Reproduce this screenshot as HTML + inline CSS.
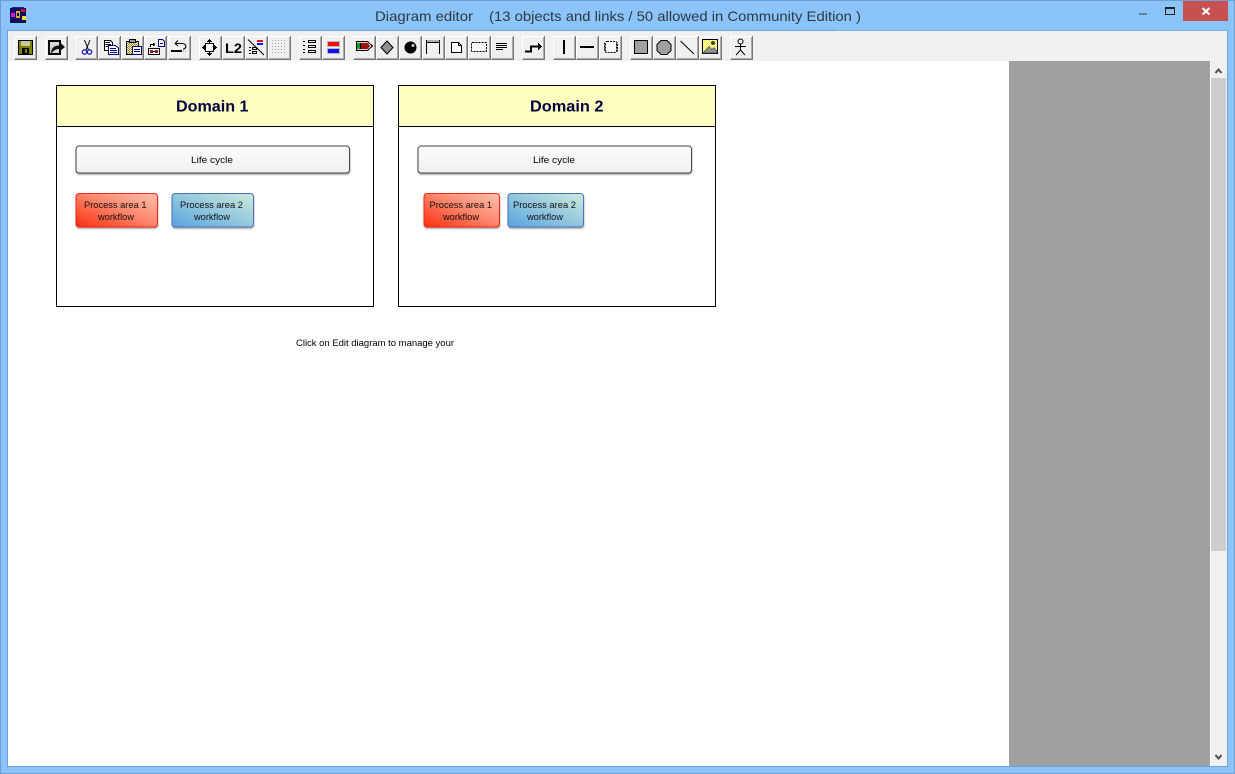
<!DOCTYPE html>
<html><head><meta charset="utf-8"><title>Diagram editor</title>
<style>
html,body{margin:0;padding:0;width:1235px;height:774px;overflow:hidden;background:#8ac4fb}
svg{display:block}
text{font-family:"Liberation Sans",sans-serif}
</style></head>
<body>
<svg xmlns="http://www.w3.org/2000/svg" width="1235" height="774" viewBox="0 0 1235 774">
<defs>
<linearGradient id="lc" x1="0" y1="0" x2="0" y2="1"><stop offset="0" stop-color="#fcfcfc"/><stop offset="1" stop-color="#f0f0f0"/></linearGradient>
<linearGradient id="red" x1="0" y1="1" x2="1" y2="0"><stop offset="0" stop-color="#fb2c0c"/><stop offset=".55" stop-color="#fd8a70"/><stop offset="1" stop-color="#ffc0ae"/></linearGradient>
<linearGradient id="blue" x1="0" y1="1" x2="1" y2="0"><stop offset="0" stop-color="#58a4e0"/><stop offset="1" stop-color="#cdeadb"/></linearGradient>
<pattern id="chk" width="2" height="2" patternUnits="userSpaceOnUse"><rect width="2" height="2" fill="#fff"/><rect width="1" height="1" fill="#f4f000"/><rect x="1" y="1" width="1" height="1" fill="#f4f000"/></pattern>
<pattern id="chk2" width="2" height="2" patternUnits="userSpaceOnUse"><rect width="2" height="2" fill="#f0eac0"/><rect width="1" height="1" fill="#a09030"/><rect x="1" y="1" width="1" height="1" fill="#a09030"/></pattern>
<filter id="sh" x="-5%" y="-10%" width="110%" height="125%"><feDropShadow dx=".3" dy="1.500" stdDeviation=".7" flood-color="#000" flood-opacity=".32"/></filter>
<g id="b" shape-rendering="crispEdges">
<rect x="0" y="1" width="23" height="24" fill="#f0f0f0"/>
<path d="M.5 24V1.500H22" fill="none" stroke="#fff"/>
<path d="M.5 24.500H22.500V1" fill="none" stroke="#787878"/>
<path d="M1 23.500H21.500V2" fill="none" stroke="#ababab"/>
</g>
</defs>

<!-- window frame -->
<rect x="0" y="0" width="1235" height="774" fill="#8ac4fb"/>
<rect x=".5" y=".5" width="1234" height="773" fill="none" stroke="#6f9fcf"/>
<rect x="7.500" y="30.500" width="1220" height="736" fill="#f0f0f0" stroke="#6fa3d6"/>
<rect x="836" y="30" width="391" height="1" fill="#7fb0e0"/>

<!-- app icon -->
<g shape-rendering="crispEdges">
<rect x="10" y="8" width="16" height="15" fill="#0a0a6a"/>
<rect x="12" y="7" width="12" height="1" fill="#20208a"/>
<rect x="11" y="13" width="4" height="4" fill="#e010d0"/>
<rect x="21" y="9" width="4" height="3" fill="#e01010"/>
<rect x="22" y="16" width="4" height="4" fill="#f0e020"/>
<rect x="16" y="11" width="4" height="7" fill="#d8b030"/>
<rect x="17" y="13" width="2" height="3" fill="#0a0a6a"/>
<rect x="10" y="20" width="16" height="3" fill="#101050"/>
</g>

<!-- title -->
<text x="375" y="21" font-size="14" fill="#303840" textLength="98" lengthAdjust="spacingAndGlyphs">Diagram editor</text>
<text x="489" y="21" font-size="14" fill="#303840" textLength="372" lengthAdjust="spacingAndGlyphs">(13 objects and links / 50 allowed in Community Edition )</text>

<!-- caption buttons -->
<g shape-rendering="crispEdges">
<rect x="1139" y="13" width="8" height="2" fill="#5f7f9f"/>
<rect x="1165.500" y="7.500" width="9" height="7" fill="none" stroke="#222" stroke-width="1"/>
<rect x="1165" y="7" width="10" height="2" fill="#222"/>
<rect x="1183" y="1" width="45" height="20" fill="#c75050"/>
</g>
<path d="M1202.500 8L1209.500 14.500M1209.500 8L1202.500 14.500" stroke="#fff" stroke-width="2" fill="none"/>

<!-- watermark -->
<circle cx="84" cy="46" r="9" fill="none" stroke="#e2e2e2" stroke-width="3"/>

<!-- toolbar buttons -->
<g>
<use href="#b" x="14" y="35"/><use href="#b" x="45" y="35"/>
<use href="#b" x="75" y="35"/><use href="#b" x="98" y="35"/><use href="#b" x="121" y="35"/><use href="#b" x="144" y="35"/><use href="#b" x="168" y="35"/>
<use href="#b" x="199" y="35"/><use href="#b" x="222" y="35"/><use href="#b" x="245" y="35"/><use href="#b" x="268" y="35"/>
<use href="#b" x="299" y="35"/><use href="#b" x="322" y="35"/>
<use href="#b" x="353" y="35"/><use href="#b" x="376" y="35"/><use href="#b" x="399" y="35"/><use href="#b" x="422" y="35"/><use href="#b" x="445" y="35"/><use href="#b" x="468" y="35"/><use href="#b" x="491" y="35"/>
<use href="#b" x="522" y="35"/>
<use href="#b" x="553" y="35"/><use href="#b" x="576" y="35"/><use href="#b" x="599" y="35"/>
<use href="#b" x="630" y="35"/><use href="#b" x="653" y="35"/><use href="#b" x="676" y="35"/><use href="#b" x="699" y="35"/>
<use href="#b" x="730" y="35"/>
</g>

<g shape-rendering="crispEdges">
<!-- save -->
<rect x="18" y="40" width="15" height="15" fill="#000"/>
<rect x="19" y="41" width="13" height="13" fill="#808000"/>
<rect x="21" y="41" width="9" height="5" fill="#c8c8a0"/>
<rect x="22" y="48" width="7" height="6" fill="#000"/>
<rect x="25" y="49" width="2" height="4" fill="#808000"/>
<!-- open/export -->
<rect x="48" y="40" width="13" height="15" fill="#000"/>
<rect x="50" y="42" width="9" height="11" fill="#d8d8d8"/>
</g>
<path d="M51 54C51 48 54 45.500 59 45.500V41.500L65 47L59 52V49C56 49 53 50.500 51 54Z" fill="#111"/>

<!-- scissors -->
<g fill="none" stroke="#000" stroke-width="1">
<path d="M84.500 40L88.500 50M90 40L86 50"/>
<circle cx="84.500" cy="52" r="2.200" stroke="#2020b0" stroke-width="1.300"/>
<circle cx="89.500" cy="52" r="2.200" stroke="#2020b0" stroke-width="1.300"/>
</g>

<g shape-rendering="crispEdges">
<!-- copy -->
<path d="M104.500 40.500H110.500L112.500 42.500V50.500H104.500Z" fill="#fff" stroke="#000"/>
<path d="M105.500 42.500H110M105.500 44.500H111M105.500 46.500H108" stroke="#000" fill="none"/>
<path d="M108.500 45.500H115.500L118.500 48V54.500H108.500Z" fill="#fff" stroke="#000080"/>
<path d="M110 48.500H116M110 50.500H117M110 52.500H117" stroke="#000080" fill="none"/>
<!-- paste -->
<rect x="126.500" y="41.500" width="12" height="13" fill="url(#chk2)" stroke="#000"/>
<rect x="129.500" y="39.500" width="6" height="3" fill="#a0a0a0" stroke="#000"/>
<rect x="132.500" y="46.500" width="9" height="8" fill="#fff" stroke="#000080"/>
<path d="M134 49.500H140M134 51.500H140" stroke="#000080"/>
<!-- special -->
<rect x="148.500" y="48.500" width="11" height="6" fill="#fff" stroke="#000"/>
<rect x="150" y="50" width="3" height="3" fill="#902020"/>
<rect x="155" y="50" width="3" height="3" fill="#902020"/>
<rect x="153" y="51" width="2" height="1" fill="#000"/>
<path d="M150.500 47V44.500H154" stroke="#000" fill="none"/>
<path d="M153 43h1v3h-1zM154 43.500h1v2h-1z" fill="#000"/>
<path d="M158.500 39.500H162.500L164.500 41.500V46.500H158.500Z" fill="#fff" stroke="#000080"/>
<path d="M160 43.500H163" stroke="#000080"/>
<!-- undo -->
<rect x="171" y="50" width="11" height="2" fill="#000"/>
<path d="M183 51h1M185 51h1" stroke="#808080"/>
</g>
<path d="M175 43.500H182C187 43.500 187 49 183 49M175 43.500L178 40.500M175 43.500L178 46" fill="none" stroke="#000" stroke-width="1.100"/>

<g shape-rendering="crispEdges">
<!-- move -->
<rect x="205.500" y="43.500" width="8" height="8" fill="#fff" stroke="#000"/>
<path d="M209 39h1v1h-1zM208 40h3v1h-3zM207 41h5v1h-5zM209 42h1v1h-1z" fill="#000"/>
<path d="M209 55h1v1h-1zM208 54h3v1h-3zM207 53h5v1h-5zM209 52h1v1h-1z" fill="#000"/>
<path d="M202 47h1v1h-1zM203 46h1v3h-1zM204 45h1v5h-1zM216 47h1v1h-1zM215 46h1v3h-1zM214 45h1v5h-1z" fill="#000"/>
</g>
<!-- L2 -->
<text x="225" y="53" font-size="14" font-weight="bold" fill="#000" textLength="17" lengthAdjust="spacingAndGlyphs">L2</text>

<g shape-rendering="crispEdges">
<!-- layers off -->
<rect x="257" y="40" width="6" height="2" fill="#e01010"/>
<rect x="257" y="43" width="6" height="2" fill="#1010e0"/>
<path d="M249 47h2v1h-2zM249 50h2v1h-2zM249 53h2v1h-2z" fill="#000"/>
<rect x="252.500" y="47.500" width="4" height="2" fill="none" stroke="#000"/>
<rect x="252.500" y="51.500" width="4" height="2" fill="none" stroke="#000"/>
<!-- grid -->
<g fill="#a4a4a4">
<path d="M272 40h1v1h-1zM275 40h1v1h-1zM278 40h1v1h-1zM281 40h1v1h-1zM284 40h1v1h-1z"/>
<path d="M272 43h1v1h-1zM275 43h1v1h-1zM278 43h1v1h-1zM281 43h1v1h-1zM284 43h1v1h-1z"/>
<path d="M272 46h1v1h-1zM275 46h1v1h-1zM278 46h1v1h-1zM281 46h1v1h-1zM284 46h1v1h-1z"/>
<path d="M272 49h1v1h-1zM275 49h1v1h-1zM278 49h1v1h-1zM281 49h1v1h-1zM284 49h1v1h-1z"/>
<path d="M272 52h1v1h-1zM275 52h1v1h-1zM278 52h1v1h-1zM281 52h1v1h-1zM284 52h1v1h-1z"/>
</g>
<!-- list -->
<path d="M303 41h2v1h-2zM303 45h2v1h-2zM303 49h2v1h-2zM303 52h2v1h-2z" fill="#000"/>
<rect x="308.500" y="40.500" width="7" height="2" fill="none" stroke="#000"/>
<rect x="308.500" y="45.500" width="7" height="2" fill="none" stroke="#000"/>
<rect x="308.500" y="50.500" width="7" height="2" fill="none" stroke="#000"/>
<!-- red/blue -->
<rect x="327" y="41" width="13" height="6" fill="#b8b8b8"/>
<rect x="327" y="48" width="13" height="6" fill="#b8b8b8"/>
<rect x="328" y="42" width="11" height="4" fill="#f01010"/>
<rect x="328" y="49" width="11" height="4" fill="#1010f0"/>
<!-- tag -->
<path d="M356.500 41.500H367.500L372.500 46L367.500 50.500H356.500Z" fill="#d8d8d8" stroke="#000"/>
<rect x="357" y="43" width="3" height="6" fill="#10a010"/>
<rect x="360" y="43" width="1" height="6" fill="#000"/>
<path d="M361 43h6l3 3l-3 3h-6z" fill="#a01010"/>
</g>
<!-- diamond -->
<path d="M387 41L393 47.500L387 54L381 47.500Z" fill="#909090" stroke="#000"/>
<!-- ball -->
<circle cx="410.500" cy="47.500" r="6" fill="#000"/>
<circle cx="413" cy="45.500" r="1.500" fill="#d0d0d0"/>
<g shape-rendering="crispEdges">
<!-- frame -->
<rect x="426" y="40" width="14" height="2" fill="#b0b0b0"/>
<path d="M426.500 40V54M439.500 40V54M427 42.500H439" stroke="#000" fill="none"/>
<!-- doc -->
<path d="M451.500 42.500H458.500L461.500 45.500V52.500H451.500Z" fill="#fff" stroke="#000"/>
<path d="M458.500 42.500V45.500H461.500" fill="none" stroke="#000"/>
<!-- dashed -->
<rect x="471.500" y="42.500" width="15" height="9" rx="1" fill="#f8f8f8" stroke="#000" stroke-dasharray="2 1"/>
<!-- lines -->
<path d="M496 43.500H507M496 45.500H507M496 47.500H507M496 49.500H503" stroke="#000"/>
<!-- connector -->
<path d="M525 51.500H531V46.500H538" stroke="#000" stroke-width="2" fill="none"/>
<path d="M538 43h1v7h-1zM539 44h1v5h-1zM540 45h1v3h-1zM541 46h1v1h-1z" fill="#000"/>
<!-- vertical -->
<rect x="563" y="40" width="2" height="14" fill="#000"/>
<!-- horizontal -->
<rect x="580" y="46" width="14" height="2" fill="#000"/>
</g>
<!-- dashed swimlane -->
<rect x="604.500" y="41.500" width="13" height="11" rx="2.500" fill="#f8f8f8" stroke="#000" stroke-dasharray="2 1"/>
<path d="M605.500 43.500V51M616.500 43.500V51" stroke="#000" fill="none" stroke-dasharray="2 1"/>
<!-- square -->
<rect x="634.500" y="40.500" width="13" height="13" fill="#a0a0a0" stroke="#000" shape-rendering="crispEdges"/>
<!-- circle -->
<path d="M661 40.500H667L671 44.500V50.500L667 54.500H661L657 50.500V44.500Z" fill="#a0a0a0" stroke="#000"/>
<!-- line -->
<path d="M680.500 41L694 54" stroke="#000" fill="none"/>
<!-- image -->
<rect x="702.500" y="39.500" width="15" height="14" fill="url(#chk)" stroke="#000" shape-rendering="crispEdges"/>
<circle cx="713" cy="43" r="2" fill="#404040"/>
<path d="M703 53L709 46.500L712 49.500L714 47.500L717 51V53Z" fill="#909090" stroke="#505050" stroke-width=".7"/>
<!-- actor -->
<g fill="none" stroke="#000">
<circle cx="740.500" cy="41.500" r="2.500"/>
<path d="M740.500 44V50M735 46.500H746M740.500 50L736 55M740.500 50L745 55"/>
</g>
<!-- layers diagonal -->
<path d="M248 39.500L264 55" stroke="#000" fill="none"/>

<!-- canvas -->
<g shape-rendering="crispEdges">
<rect x="8" y="61" width="1001" height="705" fill="#fff"/>
<rect x="1009" y="61" width="201" height="705" fill="#a0a0a0"/>
<rect x="1210" y="61" width="1" height="705" fill="#fff"/>
<rect x="1211" y="61" width="16" height="705" fill="#f0f0f0"/>
<rect x="1211" y="78" width="15" height="473" fill="#cdcdcd"/>
</g>
<path d="M1215.500 73L1218.500 69.500L1221.500 73M1215.500 755L1218.500 758.500L1221.500 755" fill="none" stroke="#505050" stroke-width="2"/>

<!-- domain 1 -->
<g shape-rendering="crispEdges">
<rect x="56.500" y="85.500" width="317" height="221" fill="#fff" stroke="#000"/>
<rect x="57" y="86" width="316" height="40" fill="#ffffc0"/>
<rect x="57" y="126" width="316" height="1" fill="#000"/>
</g>
<text x="176" y="111.500" font-size="16" font-weight="bold" fill="#000040" textLength="72.500" lengthAdjust="spacingAndGlyphs">Domain 1</text>
<rect x="76" y="146" width="273.500" height="27" rx="3" fill="url(#lc)" stroke="#444" filter="url(#sh)"/>
<text x="191" y="163" font-size="9.500" fill="#000" textLength="42" lengthAdjust="spacingAndGlyphs">Life cycle</text>
<rect x="76" y="193.500" width="81.500" height="33.500" rx="3" fill="url(#red)" stroke="#f02814" filter="url(#sh)"/>
<text x="84" y="208" font-size="9.500" fill="#111" textLength="62.500" lengthAdjust="spacingAndGlyphs">Process area 1</text>
<text x="98" y="220" font-size="9.500" fill="#111" textLength="36" lengthAdjust="spacingAndGlyphs">workflow</text>
<rect x="172" y="193.500" width="81.500" height="33.500" rx="3" fill="url(#blue)" stroke="#4c70bc" filter="url(#sh)"/>
<text x="180" y="208" font-size="9.500" fill="#111" textLength="63" lengthAdjust="spacingAndGlyphs">Process area 2</text>
<text x="194" y="220" font-size="9.500" fill="#111" textLength="36" lengthAdjust="spacingAndGlyphs">workflow</text>

<!-- domain 2 -->
<g shape-rendering="crispEdges">
<rect x="398.500" y="85.500" width="317" height="221" fill="#fff" stroke="#000"/>
<rect x="399" y="86" width="316" height="40" fill="#ffffc0"/>
<rect x="399" y="126" width="316" height="1" fill="#000"/>
</g>
<text x="530" y="111.500" font-size="16" font-weight="bold" fill="#000040" textLength="73.500" lengthAdjust="spacingAndGlyphs">Domain 2</text>
<rect x="418" y="146" width="273.500" height="27" rx="3" fill="url(#lc)" stroke="#444" filter="url(#sh)"/>
<text x="533" y="163" font-size="9.500" fill="#000" textLength="42" lengthAdjust="spacingAndGlyphs">Life cycle</text>
<rect x="424" y="193.500" width="75.500" height="33.500" rx="3" fill="url(#red)" stroke="#f02814" filter="url(#sh)"/>
<text x="429.500" y="208" font-size="9.500" fill="#111" textLength="62.500" lengthAdjust="spacingAndGlyphs">Process area 1</text>
<text x="443" y="220" font-size="9.500" fill="#111" textLength="36" lengthAdjust="spacingAndGlyphs">workflow</text>
<rect x="508" y="193.500" width="75.500" height="33.500" rx="3" fill="url(#blue)" stroke="#4c70bc" filter="url(#sh)"/>
<text x="513" y="208" font-size="9.500" fill="#111" textLength="63" lengthAdjust="spacingAndGlyphs">Process area 2</text>
<text x="527" y="220" font-size="9.500" fill="#111" textLength="36" lengthAdjust="spacingAndGlyphs">workflow</text>

<text x="296" y="346" font-size="9.500" fill="#000" textLength="158" lengthAdjust="spacingAndGlyphs">Click on Edit diagram to manage your</text>
</svg>
</body></html>
